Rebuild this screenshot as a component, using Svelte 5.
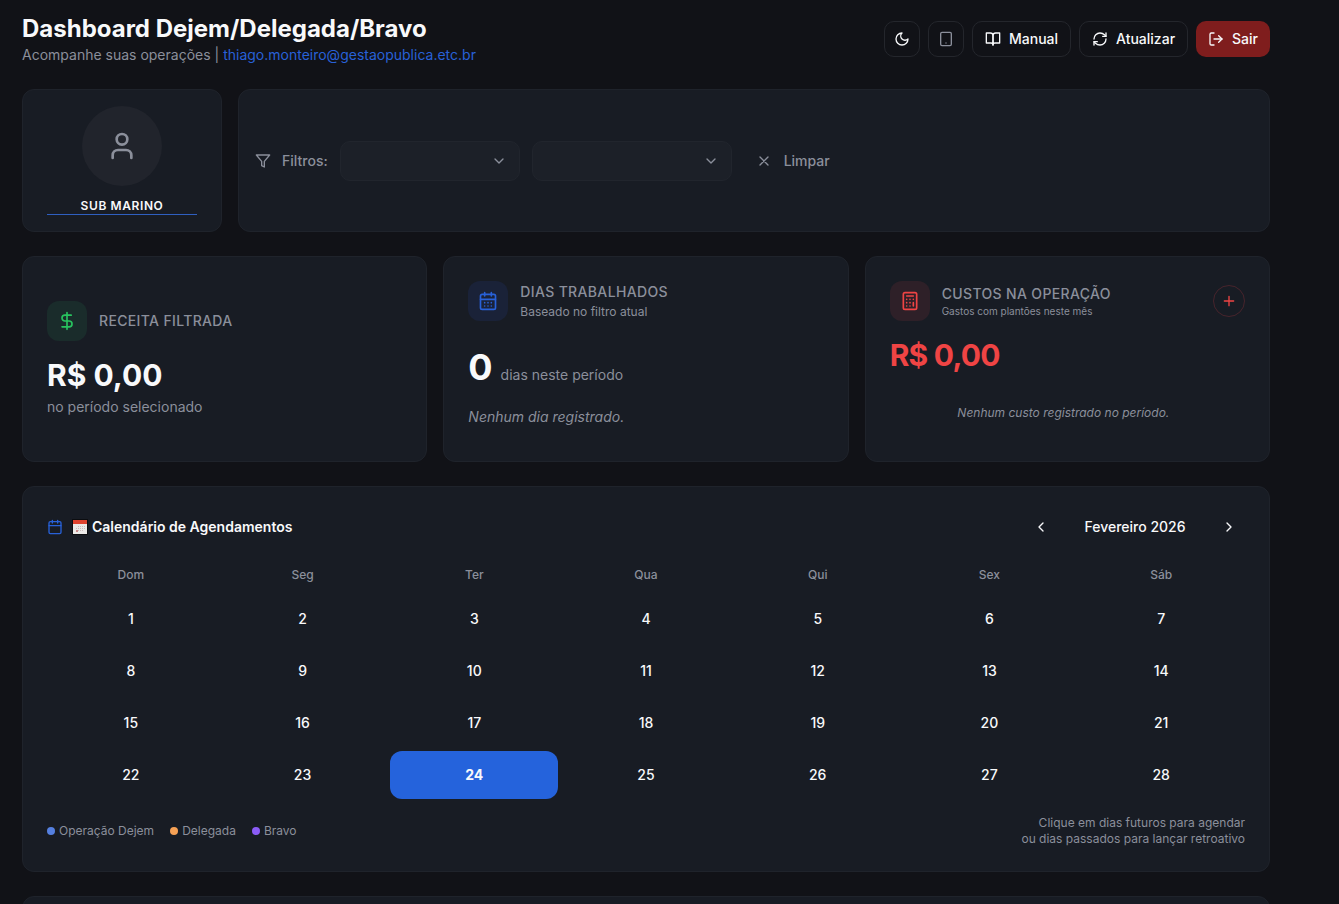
<script lang="ts">
  const weekdays = ['Dom', 'Seg', 'Ter', 'Qua', 'Qui', 'Sex', 'Sáb'];
  const days = Array.from({ length: 28 }, (_, i) => i + 1);
  const legend = [
    { label: 'Operação Dejem', color: '#5580e0' },
    { label: 'Delegada', color: '#f6a155' },
    { label: 'Bravo', color: '#8b5cf6' },
  ];

  let name = $state('SUB MARINO');
  let selected = $state(24);
  let period = $state('');
  let operation = $state('');

  const clearFilters = () => {
    period = '';
    operation = '';
  };
</script>

{#snippet chevron(d: string)}
  <svg class="icon" viewBox="0 0 24 24" aria-hidden="true"><path {d} /></svg>
{/snippet}

<div class="page">
  <header>
    <div>
      <h1>Dashboard Dejem/Delegada/Bravo</h1>
      <p class="subtitle">
        Acompanhe suas operações |
        <a href="mailto:thiago.monteiro@gestaopublica.etc.br">thiago.monteiro@gestaopublica.etc.br</a>
      </p>
    </div>
    <nav>
      <button class="btn square" aria-label="Tema">
        <svg class="icon" viewBox="0 0 24 24"><path d="M12 3a6 6 0 0 0 9 9 9 9 0 1 1-9-9Z" /></svg>
      </button>
      <button class="btn square muted" aria-label="Celular">
        <svg class="icon" viewBox="0 0 24 24">
          <rect width="16" height="20" x="4" y="2" rx="2" />
          <path d="M12 18h.01" />
        </svg>
      </button>
      <button class="btn">
        <svg class="icon" viewBox="0 0 24 24">
          <path d="M2 3h6a4 4 0 0 1 4 4v14a3 3 0 0 0-3-3H2z" />
          <path d="M22 3h-6a4 4 0 0 0-4 4v14a3 3 0 0 1 3-3h7z" />
        </svg>
        Manual
      </button>
      <button class="btn">
        <svg class="icon" viewBox="0 0 24 24">
          <path d="M3 12a9 9 0 0 1 9-9 9.75 9.75 0 0 1 6.74 2.74L21 8" />
          <path d="M21 3v5h-5" />
          <path d="M21 12a9 9 0 0 1-9 9 9.75 9.75 0 0 1-6.74-2.74L3 16" />
          <path d="M8 16H3v5" />
        </svg>
        Atualizar
      </button>
      <button class="btn danger">
        <svg class="icon" viewBox="0 0 24 24">
          <path d="M9 21H5a2 2 0 0 1-2-2V5a2 2 0 0 1 2-2h4" />
          <path d="m16 17 5-5-5-5" />
          <path d="M21 12H9" />
        </svg>
        Sair
      </button>
    </nav>
  </header>

  <div class="top">
    <section class="card profile">
      <div class="avatar">
        <svg class="icon large" viewBox="0 0 24 24">
          <path d="M19 21v-2a4 4 0 0 0-4-4H9a4 4 0 0 0-4 4v2" />
          <circle cx="12" cy="7" r="4" />
        </svg>
      </div>
      <input class="name" type="text" aria-label="Nome" bind:value={name} />
    </section>

    <section class="card filters">
      <div class="filter-title">
        <svg class="icon" viewBox="0 0 24 24"><path d="M22 3H2l8 9.460V19l4 2v-8.540L22 3z" /></svg>
        <span>Filtros:</span>
      </div>
      <div class="select period">
        <select aria-label="Período" bind:value={period}><option value=""></option></select>
        {@render chevron('m6 9 6 6 6-6')}
      </div>
      <div class="select operation">
        <select aria-label="Operação" bind:value={operation}><option value=""></option></select>
        {@render chevron('m6 9 6 6 6-6')}
      </div>
      <button class="clear" onclick={clearFilters}>
        <svg class="icon" viewBox="0 0 24 24"><path d="M18 6 6 18M6 6l12 12" /></svg>
        Limpar
      </button>
    </section>
  </div>

  <div class="stats">
    <section class="card stat centered">
      <div class="stat-head">
        <div class="badge green">
          <svg class="icon medium" viewBox="0 0 24 24">
            <path d="M12 2v20" />
            <path d="M17 5H9.500a3.500 3.500 0 0 0 0 7h5a3.500 3.500 0 0 1 0 7H6" />
          </svg>
        </div>
        <h2>RECEITA FILTRADA</h2>
      </div>
      <p class="amount">R$ 0,00</p>
      <p class="note">no período selecionado</p>
    </section>

    <section class="card stat">
      <div class="stat-head">
        <div class="badge blue">
          <svg class="icon medium" viewBox="0 0 24 24">
            <rect width="18" height="18" x="3" y="4" rx="2" />
            <path d="M8 2v4M16 2v4M3 10h18M8 14h.01M12 14h.01M16 14h.01M8 18h.01M12 18h.01M16 18h.01" />
          </svg>
        </div>
        <div class="stat-title">
          <h2>DIAS TRABALHADOS</h2>
          <p>Baseado no filtro atual</p>
        </div>
      </div>
      <p class="count"><strong>0</strong> <span>dias neste período</span></p>
      <p class="empty">Nenhum dia registrado.</p>
    </section>

    <section class="card stat">
      <div class="stat-head">
        <div class="badge red">
          <svg class="icon medium" viewBox="0 0 24 24">
            <rect width="16" height="20" x="4" y="2" rx="2" />
            <path d="M8 6h8M16 14v4M16 10h.01M12 10h.01M8 10h.01M12 14h.01M8 14h.01M12 18h.01M8 18h.01" />
          </svg>
        </div>
        <div class="stat-title small">
          <h2>CUSTOS NA OPERAÇÃO</h2>
          <p>Gastos com plantões neste mês</p>
        </div>
        <button class="add" aria-label="Adicionar custo">
          <svg class="icon" viewBox="0 0 24 24"><path d="M5 12h14M12 5v14" /></svg>
        </button>
      </div>
      <p class="amount cost">R$ 0,00</p>
      <p class="empty-cost">Nenhum custo registrado no período.</p>
    </section>
  </div>

  <section class="card calendar">
    <div class="calendar-head">
      <svg class="icon accent" viewBox="0 0 24 24">
        <rect width="18" height="18" x="3" y="4" rx="2" />
        <path d="M8 2v4M16 2v4M3 10h18" />
      </svg>
      <h3>
        <svg class="emoji" viewBox="0 0 14 14" aria-hidden="true">
          <path fill="#eceae8" d="M0 0h14v14H0z" />
          <path fill="#e0432f" d="M0 0h14v4H0z" />
          <path stroke="#cbbcbc" stroke-dasharray="1 1" d="M5 6.500h7M3 8.500h9M3 10.500h8" />
          <path fill="#c98a8c" d="M3 10h2v2H3z" />
        </svg>
        Calendário de Agendamentos
      </h3>
      <div class="month">
        <button aria-label="Mês anterior">{@render chevron('m15 18-6-6 6-6')}</button>
        <span>Fevereiro 2026</span>
        <button aria-label="Próximo mês">{@render chevron('m9 18 6-6-6-6')}</button>
      </div>
    </div>

    <div class="grid">
      {#each weekdays as weekday}
        <div class="weekday">{weekday}</div>
      {/each}
      {#each days as day}
        <button class="day" class:selected={day === selected} onclick={() => (selected = day)}>
          {day}
        </button>
      {/each}
    </div>

    <footer>
      <ul>
        {#each legend as item}
          <li><span class="dot" style="background: {item.color}"></span>{item.label}</li>
        {/each}
      </ul>
      <p>Clique em dias futuros para agendar<br />ou dias passados para lançar retroativo</p>
    </footer>
  </section>

  <section class="card next"></section>
</div>

<style>
  :global(body) {
    background: #111217;
  }
  .page {
    box-sizing: border-box;
    height: 100vh;
    overflow: hidden;
    padding: 13px 69px 0 22px;
    color: #f8f9fb;
    font-family: Inter, sans-serif;
    font-size: 14px;
    line-height: 20px;
  }
  .page * {
    box-sizing: border-box;
  }
  h1,
  h2,
  h3,
  p,
  ul {
    margin: 0;
    padding: 0;
  }
  button,
  input,
  select {
    margin: 0;
    padding: 0;
    border: 0;
    background: none;
    color: inherit;
    font: inherit;
  }
  button {
    cursor: pointer;
  }
  .icon {
    flex: none;
    width: 16px;
    height: 16px;
    fill: none;
    stroke: currentColor;
    stroke-width: 2;
    stroke-linecap: round;
    stroke-linejoin: round;
  }
  .icon.medium {
    width: 20px;
    height: 20px;
  }
  .icon.large {
    width: 32px;
    height: 32px;
  }

  header {
    display: flex;
    align-items: center;
    justify-content: space-between;
    margin-bottom: 24px;
  }
  h1 {
    font-size: 24px;
    font-weight: 700;
    line-height: 32px;
  }
  .subtitle {
    color: #8b8f9b;
  }
  a {
    color: #2861d8;
    text-decoration: none;
  }
  nav {
    display: flex;
    gap: 8px;
  }
  .btn {
    display: flex;
    align-items: center;
    justify-content: center;
    gap: 8px;
    height: 36px;
    padding: 0 12px;
    border: 1px solid #24262c;
    border-radius: 10px;
    font-weight: 500;
  }
  .square {
    width: 36px;
    padding: 0;
  }
  .muted {
    color: #8b8f9b;
  }
  .danger {
    border: 0;
    background: #7f1d1d;
  }

  .card {
    border: 1px solid #1f232b;
    border-radius: 12px;
    background: #181c24;
  }
  .top {
    display: flex;
    gap: 16px;
    margin-bottom: 24px;
  }
  .profile {
    display: flex;
    flex-direction: column;
    align-items: center;
    gap: 10px;
    width: 200px;
    padding: 16px 24px;
  }
  .avatar {
    display: grid;
    place-items: center;
    width: 80px;
    height: 80px;
    border-radius: 50%;
    background: #21242c;
    color: #8b8f9b;
  }
  .name {
    width: 100%;
    height: 19px;
    border-bottom: 1px solid #2f5fc0;
    font-size: 12px;
    font-weight: 600;
    line-height: 16px;
    letter-spacing: 0.05em;
    text-align: center;
  }
  .filters {
    display: flex;
    flex: 1;
    align-items: center;
    gap: 12px;
    padding: 16px;
    color: #8b8f9b;
    font-weight: 500;
  }
  .filter-title {
    display: flex;
    align-items: center;
    gap: 11px;
  }
  .select {
    display: grid;
    align-items: center;
  }
  .select > * {
    grid-area: 1 / 1;
  }
  .select select {
    appearance: none;
    width: 100%;
    height: 40px;
    padding: 0 32px 0 12px;
    border: 1px solid #21252d;
    border-radius: 10px;
    background: #1c2028;
  }
  .select .icon {
    justify-self: end;
    margin-right: 13px;
    pointer-events: none;
  }
  .period {
    width: 180px;
  }
  .operation {
    width: 200px;
  }
  .clear {
    display: flex;
    align-items: center;
    gap: 12px;
    height: 36px;
    padding: 0 12px;
  }

  .stats {
    display: grid;
    grid-template-columns: repeat(3, 1fr);
    gap: 16px;
    margin-bottom: 24px;
  }
  .stat {
    display: flex;
    flex-direction: column;
    min-height: 206px;
    padding: 24px;
    color: #8b8f9b;
  }
  .centered {
    justify-content: center;
  }
  .stat-head {
    display: flex;
    align-items: center;
    gap: 12px;
    margin-bottom: 16px;
  }
  .badge {
    display: grid;
    place-items: center;
    width: 40px;
    height: 40px;
    border-radius: 12px;
  }
  .green {
    background: #1a2c2b;
    color: #28c35f;
  }
  .blue {
    background: #1a2238;
    color: #2861d8;
  }
  .red {
    background: #2e2028;
    color: #ef4444;
  }
  h2 {
    font-size: 14px;
    font-weight: 500;
    line-height: 20px;
    letter-spacing: 0.025em;
  }
  .stat-title {
    display: flex;
    flex: 1;
    flex-direction: column;
    gap: 2px;
  }
  .stat-title p {
    font-size: 12px;
    line-height: 16px;
  }
  .stat-title.small {
    gap: 0;
  }
  .stat-title.small p {
    font-size: 10px;
    line-height: 14px;
  }
  .amount {
    margin-bottom: 4px;
    color: #f8f9fb;
    font-size: 30px;
    font-weight: 700;
    line-height: 36px;
  }
  .cost {
    color: #ef4444;
    letter-spacing: -0.025em;
  }
  .count {
    display: flex;
    align-items: baseline;
    gap: 8px;
    margin: 10px 0 20px;
  }
  .count strong {
    color: #f8f9fb;
    font-size: 36px;
    font-weight: 700;
    line-height: 40px;
  }
  .empty {
    font-style: italic;
  }
  .empty-cost {
    margin-top: 28px;
    padding-right: 8px;
    font-size: 12px;
    font-style: italic;
    line-height: 16px;
    text-align: center;
  }
  .add {
    display: grid;
    place-items: center;
    width: 32px;
    height: 32px;
    border: 1px solid #47242c;
    border-radius: 50%;
    color: #ef4444;
  }

  .calendar {
    margin-bottom: 24px;
    padding: 24px;
  }
  .calendar-head {
    display: flex;
    align-items: center;
    gap: 10px;
    margin-bottom: 16px;
  }
  .accent {
    color: #2861d8;
  }
  h3 {
    display: flex;
    flex: 1;
    align-items: center;
    gap: 5px;
    font-size: 14px;
    font-weight: 600;
  }
  .emoji {
    width: 14px;
    height: 14px;
    outline: 1px solid #0c0d10;
  }
  .month {
    display: flex;
    align-items: center;
    gap: 8px;
    font-weight: 500;
  }
  .month button {
    display: grid;
    place-items: center;
    width: 32px;
    height: 32px;
  }
  .month span {
    min-width: 140px;
    text-align: center;
  }
  .grid {
    display: grid;
    grid-template-columns: repeat(7, 1fr);
    gap: 4px;
    margin-bottom: 16px;
  }
  .weekday {
    color: #8b8f9b;
    font-size: 12px;
    font-weight: 500;
    line-height: 32px;
    text-align: center;
  }
  .day {
    height: 48px;
    border-radius: 12px;
    font-weight: 500;
  }
  .selected {
    background: #2563dc;
    font-weight: 700;
  }
  footer {
    display: flex;
    align-items: center;
    justify-content: space-between;
    color: #8b8f9b;
    font-size: 12px;
    line-height: 16px;
  }
  footer p {
    text-align: right;
  }
  ul {
    display: flex;
    gap: 16px;
    list-style: none;
  }
  li {
    display: flex;
    align-items: center;
    gap: 4px;
  }
  .dot {
    width: 8px;
    height: 8px;
    border-radius: 50%;
  }
  .next {
    height: 200px;
  }
</style>
